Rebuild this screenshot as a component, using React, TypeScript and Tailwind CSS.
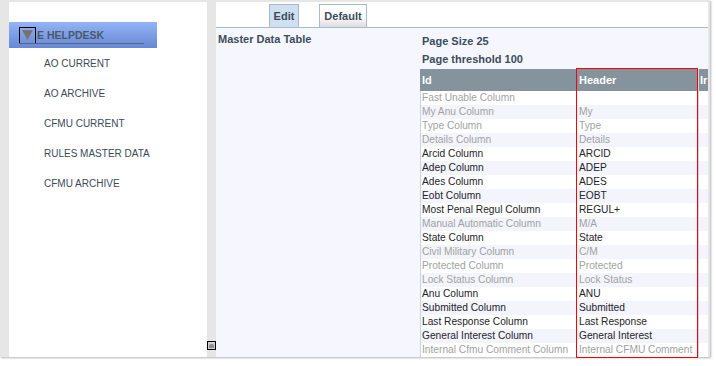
const menu = ['AO CURRENT', 'AO ARCHIVE', 'CFMU CURRENT', 'RULES MASTER DATA', 'CFMU ARCHIVE'];

const rows: [string, string, boolean][] = [
  ['Fast Unable Column', '', true],
  ['My Anu Column', 'My', true],
  ['Type Column', 'Type', true],
  ['Details Column', 'Details', true],
  ['Arcid Column', 'ARCID', false],
  ['Adep Column', 'ADEP', false],
  ['Ades Column', 'ADES', false],
  ['Eobt Column', 'EOBT', false],
  ['Most Penal Regul Column', 'REGUL+', false],
  ['Manual Automatic Column', 'M/A', true],
  ['State Column', 'State', false],
  ['Civil Military Column', 'C/M', true],
  ['Protected Column', 'Protected', true],
  ['Lock Status Column', 'Lock Status', true],
  ['Anu Column', 'ANU', false],
  ['Submitted Column', 'Submitted', false],
  ['Last Response Column', 'Last Response', false],
  ['General Interest Column', 'General Interest', false],
  ['Internal Cfmu Comment Column', 'Internal CFMU Comment', true],
];

const Sidebar = () => (
  <div className="flex w-[198px] flex-col bg-white pt-[20px]">
    <div className="relative flex h-[26px] w-[148px] items-center bg-gradient-to-b from-[#93b4f4] to-[#6688d6] pl-[10px]">
      <div className="flex h-[17px] w-[17px] items-center justify-center border border-black">
        <svg width="11" height="10" viewBox="0 0 11 10">
          <path d="M0 0 L11 0 L5.5 10 Z" fill="#727272" stroke="#8a8a8a" strokeWidth="0.6" />
        </svg>
      </div>
      <span className="ml-[1px] text-[10.5px] font-bold leading-none text-[#4a5868]">E HELPDESK</span>
      <div className="absolute left-[10px] top-[21px] h-[1px] w-[125px] bg-[#5c6474]" />
    </div>
    {menu.map((m) => (
      <div key={m} className="flex h-[30px] items-center pl-[35px] text-[10px] text-[#3c4a58]">
        {m}
      </div>
    ))}
  </div>
);

const Splitter = () => (
  <div className="flex w-[9px] flex-col justify-end pb-[7px]">
    <div className="flex h-[9px] w-[9px] items-center justify-center border border-black bg-[#d0d0d0]">
      <div className="h-[4px] w-[5px] rounded-t-[2px] bg-[#8a8a8a]" />
    </div>
  </div>
);

const DataTable = () => (
  <div className="relative mt-[1px] w-[288px]">
    <div className="flex h-[22px] items-center bg-[#85939d] text-[11px] font-bold text-white">
      <div className="w-[157px] pl-[2px]">Id</div>
      <div className="w-[121px] pl-[2px]">Header</div>
      <div className="h-full flex-1 overflow-hidden border-l border-[#c9d3dc] pl-[1px] leading-[22px]">Ir</div>
    </div>
    <div className="border-l border-[#c6d4e4]">
      {rows.map(([id, h, dim], i) => (
        <div
          key={id}
          className={`flex h-[14px] items-center text-[10.2px] leading-none ${i % 2 === 0 ? 'bg-white' : 'bg-[#f3f4fc]'} ${dim ? 'text-[#a2a2a2]' : 'text-[#1e242a]'}`}
        >
          <div className="w-[156px] whitespace-nowrap pl-[1px]">{id}</div>
          <div className="w-[121px] whitespace-nowrap pl-[2px]">{h}</div>
          <div className="h-full flex-1 border-l border-[#c6d4e4]" />
        </div>
      ))}
    </div>
    <div className="pointer-events-none absolute left-[156px] top-[-1px] h-[290px] w-[122px] border border-[#ff0000]" />
  </div>
);

const Main = () => (
  <div className="flex flex-1 flex-col">
    <div className="flex h-[27px] items-end gap-[20px] border-b border-[#a8bcd0] bg-white pl-[53px]">
      <div className="flex h-[23px] w-[30px] items-center justify-center border border-b-0 border-[#a9bccc] bg-[#cfe0f0] text-[11px] font-bold text-[#3c4c5c]">
        Edit
      </div>
      <div className="flex h-[23px] w-[48px] items-center justify-center border border-b-0 border-[#a9bccc] bg-gradient-to-b from-white via-white to-[#dcdcdc] text-[11px] font-bold text-[#3c4c5c]">
        Default
      </div>
    </div>
    <div className="flex flex-1 bg-[#f5f6fe]">
      <div className="w-[204px] pl-[2px] pt-[5px] text-[11px] font-bold leading-[13px] text-[#3c4c5c]">Master Data Table</div>
      <div className="flex flex-col pt-[4px]">
        <div className="pl-[2px] text-[11px] font-bold leading-[18px] text-[#3c4c5c]">
          <div>Page Size 25</div>
          <div>Page threshold 100</div>
        </div>
        <DataTable />
      </div>
    </div>
  </div>
);

export default function App() {
  return (
    <div className="h-[366px] w-[716px] bg-white" style={{ fontFamily: '"Liberation Sans", Arial, sans-serif' }}>
      <div className="flex h-[357px] w-[710px] bg-[#e6e6e6] pl-[9px] pr-[2px] pt-[2px] shadow-[1px_1px_2px_rgba(0,0,0,0.3)]">
        <Sidebar />
        <Splitter />
        <Main />
      </div>
    </div>
  );
}
